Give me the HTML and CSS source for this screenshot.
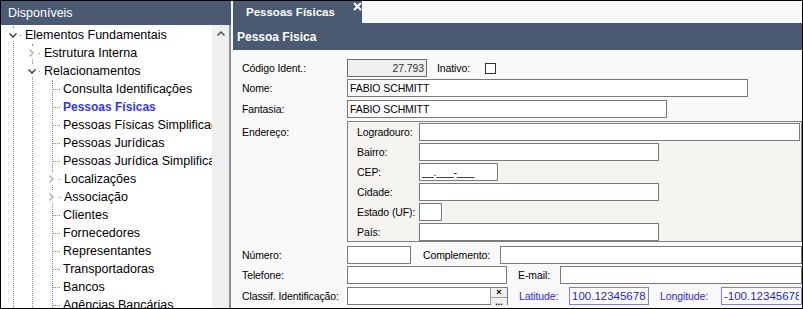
FILE: index.html
```html
<!DOCTYPE html>
<html lang="pt-BR">
<head>
    <meta charset="UTF-8">
    <meta name="viewport" content="width=device-width, initial-scale=1.0">
    <title>Pessoas Físicas</title>
    <link rel="stylesheet" href="styles.css">
</head>
<body>
    <div class="window">
        <div class="sidebar">
            <div class="sidebar-title">Disponíveis</div>
            <div class="tree-body">
                <div class="tree">
                    <ul class="tree-list root">
                        <li>
                            <div class="node node-branch">
                                <span class="toggle"><svg width="8" height="5" viewBox="0 0 8 5"><polyline points="0.5,0.5 4,4 7.5,0.5" fill="none" stroke="#404040" stroke-width="1.5"/></svg></span>
                                <span class="dot"></span>
                                <span class="text">Elementos Fundamentais</span>
                            </div>
                            <ul class="tree-list">
                                <li>
                                    <div class="node node-branch">
                                        <span class="toggle"><svg width="5" height="8" viewBox="0 0 5 8"><polyline points="0.5,0.5 4,4 0.5,7.5" fill="none" stroke="#b4b4b4" stroke-width="1.5"/></svg></span>
                                        <span class="dot"></span>
                                        <span class="text">Estrutura Interna</span>
                                    </div>
                                </li>
                                <li>
                                    <div class="node node-branch">
                                        <span class="toggle"><svg width="8" height="5" viewBox="0 0 8 5"><polyline points="0.5,0.5 4,4 7.5,0.5" fill="none" stroke="#404040" stroke-width="1.5"/></svg></span>
                                        <span class="dot"></span>
                                        <span class="text">Relacionamentos</span>
                                    </div>
                                    <ul class="tree-list">
                                        <li><div class="node"><span class="link"></span><span class="text">Consulta Identificações</span></div></li>
                                        <li><div class="node selected"><span class="link"></span><span class="text">Pessoas Físicas</span></div></li>
                                        <li><div class="node"><span class="link"></span><span class="text">Pessoas Físicas Simplificada</span></div></li>
                                        <li><div class="node"><span class="link"></span><span class="text">Pessoas Jurídicas</span></div></li>
                                        <li><div class="node"><span class="link"></span><span class="text">Pessoas Jurídica Simplificada</span></div></li>
                                        <li>
                                            <div class="node node-branch">
                                                <span class="toggle"><svg width="5" height="8" viewBox="0 0 5 8"><polyline points="0.5,0.5 4,4 0.5,7.5" fill="none" stroke="#b4b4b4" stroke-width="1.5"/></svg></span>
                                                <span class="dot"></span>
                                                <span class="text">Localizações</span>
                                            </div>
                                        </li>
                                        <li>
                                            <div class="node node-branch">
                                                <span class="toggle"><svg width="5" height="8" viewBox="0 0 5 8"><polyline points="0.5,0.5 4,4 0.5,7.5" fill="none" stroke="#b4b4b4" stroke-width="1.5"/></svg></span>
                                                <span class="dot"></span>
                                                <span class="text">Associação</span>
                                            </div>
                                        </li>
                                        <li><div class="node"><span class="link"></span><span class="text">Clientes</span></div></li>
                                        <li><div class="node"><span class="link"></span><span class="text">Fornecedores</span></div></li>
                                        <li><div class="node"><span class="link"></span><span class="text">Representantes</span></div></li>
                                        <li><div class="node"><span class="link"></span><span class="text">Transportadoras</span></div></li>
                                        <li><div class="node"><span class="link"></span><span class="text">Bancos</span></div></li>
                                        <li><div class="node"><span class="link"></span><span class="text">Agências Bancárias</span></div></li>
                                    </ul>
                                </li>
                            </ul>
                        </li>
                    </ul>
                </div>
                <div class="scrollbar">
                    <svg width="8" height="5" viewBox="0 0 8 5"><polyline points="0.5,4.5 4,1 7.5,4.5" fill="none" stroke="#505050" stroke-width="1.5"/></svg>
                </div>
            </div>
        </div>

        <div class="main">
            <div class="tabs">
                <div class="tab">
                    <span class="tab-text">Pessoas Físicas</span>
                    <svg class="tab-close" width="9" height="9" viewBox="0 0 9 9"><path d="M1 1 L8 8 M8 1 L1 8" stroke="#fff" stroke-width="2"/></svg>
                </div>
            </div>
            <div class="title-bar">Pessoa Fisica</div>

            <div class="form">
                <div class="row">
                    <label class="lbl">Código Ident.:</label>
                    <input class="field field-code" type="text" value="27.793" readonly>
                    <label class="lbl-inline inativo">Inativo:</label>
                    <span class="check"></span>
                </div>
                <div class="row gap-2">
                    <label class="lbl">Nome:</label>
                    <input class="field w-401" type="text" value="FABIO SCHMITT">
                </div>
                <div class="row gap-3">
                    <label class="lbl">Fantasia:</label>
                    <input class="field w-320" type="text" value="FABIO SCHMITT">
                </div>
                <div class="row row-top gap-3">
                    <label class="lbl lbl-top">Endereço:</label>
                    <div class="group">
                        <div class="row">
                            <label class="lbl-sub">Logradouro:</label>
                            <input class="field grow" type="text">
                        </div>
                        <div class="row">
                            <label class="lbl-sub">Bairro:</label>
                            <input class="field w-240" type="text">
                        </div>
                        <div class="row">
                            <label class="lbl-sub">CEP:</label>
                            <input class="field w-79" type="text" value="__.___-___">
                        </div>
                        <div class="row">
                            <label class="lbl-sub">Cidade:</label>
                            <input class="field w-240" type="text">
                        </div>
                        <div class="row">
                            <label class="lbl-sub">Estado (UF):</label>
                            <input class="field w-23" type="text">
                        </div>
                        <div class="row">
                            <label class="lbl-sub">País:</label>
                            <input class="field w-240" type="text">
                        </div>
                    </div>
                </div>
                <div class="row gap-4">
                    <label class="lbl">Número:</label>
                    <input class="field w-64" type="text">
                    <label class="lbl-inline complemento">Complemento:</label>
                    <input class="field grow" type="text">
                </div>
                <div class="row gap-2">
                    <label class="lbl">Telefone:</label>
                    <input class="field w-160" type="text">
                    <label class="lbl-inline email">E-mail:</label>
                    <input class="field grow" type="text">
                </div>
                <div class="row gap-3">
                    <label class="lbl">Classif. Identificação:</label>
                    <div class="lookup">
                        <div class="lookup-btns">
                            <span class="lookup-btn">×</span>
                            <span class="lookup-btn">...</span>
                        </div>
                    </div>
                    <label class="lbl-inline coord latitude">Latitude:</label>
                    <input class="field field-coord w-80" type="text" value="100.12345678">
                    <label class="lbl-inline coord longitude">Longitude:</label>
                    <input class="field field-coord grow" type="text" value="-100.12345678">
                </div>
            </div>
        </div>
    </div>
</body>
</html>
```

FILE: styles.css
```css
* {
    padding: 0;
    margin: 0;
    box-sizing: border-box;
}

body {
    font-family: "Liberation Sans", Arial, sans-serif;
    background-color: #ffffff;
}

.window {
    display: flex;
    width: 803px;
    height: 309px;
    border: 1px solid #000000;
    background-color: #f9f9f9;
    overflow: hidden;
}

/* left panel */

.sidebar {
    display: flex;
    flex-direction: column;
    width: 230px;
    flex-shrink: 0;
}

.sidebar-title {
    display: flex;
    align-items: center;
    flex-shrink: 0;
    height: 24px;
    padding-left: 7px;
    background-color: #4a5a73;
    color: #ffffff;
    font-size: 12.5px;
}

.tree-body {
    flex: 1;
    min-height: 0;
    display: flex;
    border-right: 2px solid #8c8c8c;
}

.tree {
    flex: 1;
    min-width: 0;
    padding-top: 1px;
    background-color: #ffffff;
    overflow: hidden;
    white-space: nowrap;
}

.scrollbar {
    width: 17px;
    flex-shrink: 0;
    background-color: #f0f0f0;
    display: flex;
    justify-content: center;
    padding-top: 6px;
}

.tree-list {
    list-style: none;
    border-left: 1px dotted #8a8a8a;
}

.tree-list.root {
    margin-left: 12px;
}

.tree-list .tree-list {
    margin-left: 18px;
}

.tree-list .tree-list .tree-list {
    margin-left: 19px;
}

.node {
    display: flex;
    align-items: center;
    height: 18px;
    font-size: 12.5px;
    color: #000000;
}

.node > span {
    flex-shrink: 0;
}

.node-branch {
    margin-left: -6px;
}

.toggle {
    display: flex;
    align-items: center;
    justify-content: center;
    width: 9px;
    height: 12px;
    background-color: #ffffff;
}

.dot {
    width: 1px;
    height: 1px;
    margin-left: 3px;
    background-color: #8a8a8a;
}

.node-branch .text {
    margin-left: 4px;
}

.link {
    width: 7px;
    border-top: 1px dotted #8a8a8a;
}

.node .link + .text {
    margin-left: 3px;
}

.node.selected {
    color: #3535f5;
    font-weight: bold;
    font-size: 12px;
}

/* right panel */

.main {
    flex: 1;
    min-width: 0;
    display: flex;
    flex-direction: column;
    padding-left: 2px;
}

.tabs {
    display: flex;
    flex-shrink: 0;
    height: 22px;
}

.tab {
    display: flex;
    width: 129px;
    padding-left: 13px;
    background-color: #4a5a73;
    color: #ffffff;
}

.tab-text {
    align-self: center;
    font-size: 11.5px;
    font-weight: bold;
}

.tab-close {
    margin-left: 18px;
    margin-top: 1px;
}

.title-bar {
    display: flex;
    align-items: center;
    flex-shrink: 0;
    height: 27px;
    padding-left: 4px;
    background-color: #4a5a73;
    color: #ffffff;
    font-size: 12px;
    font-weight: bold;
}

.form {
    padding: 9px 0 0 9px;
    font-size: 10.5px;
    letter-spacing: -0.1px;
    color: #000000;
}

.row {
    display: flex;
    align-items: center;
    flex-shrink: 0;
    height: 18px;
}

.row-top {
    align-items: flex-start;
    height: auto;
}

.gap-2 { margin-top: 2px; }
.gap-3 { margin-top: 3px; }
.gap-4 { margin-top: 4px; }

.lbl {
    width: 105px;
    flex-shrink: 0;
}

.lbl-top {
    padding-top: 5px;
}

.lbl-sub {
    width: 62px;
    flex-shrink: 0;
}

.lbl-inline {
    flex-shrink: 0;
}

.field {
    height: 18px;
    padding: 0 2px;
    border: 1px solid #7a7a7a;
    background-color: #ffffff;
    font-family: inherit;
    font-size: 10.5px;
    letter-spacing: -0.1px;
    color: #000000;
    outline: none;
}

.field-code {
    width: 80px;
    background-color: #f0f0f0;
    border-color: #6a6a6a;
    text-align: right;
    color: #333333;
}

.inativo { margin-left: 10px; }

.check {
    width: 11px;
    height: 11px;
    margin-left: 15px;
    border: 1px solid #333333;
    background-color: #ffffff;
}

.w-401 { width: 401px; }
.w-320 { width: 320px; }
.w-240 { width: 240px; }
.w-160 { width: 160px; }
.w-80 { width: 80px; }
.w-79 { width: 79px; }
.w-64 { width: 64px; }
.w-23 { width: 23px; }

.grow {
    flex: 1;
    min-width: 0;
}

.group {
    flex: 1;
    display: flex;
    flex-direction: column;
    gap: 2px;
    padding: 1px 1px 0 9px;
    border: 1px solid #808080;
    background-color: #f5f4f0;
}

.complemento {
    width: 77px;
    margin-left: 12px;
}

.email {
    width: 42px;
    margin-left: 11px;
}

.lookup {
    display: flex;
    justify-content: flex-end;
    width: 161px;
    height: 18px;
    border: 1px solid #7a7a7a;
    background-color: #ffffff;
}

.lookup-btns {
    display: flex;
    flex-direction: column;
    width: 17px;
    border-left: 1px solid #a0a0a0;
}

.lookup-btn {
    flex: 1;
    display: flex;
    align-items: center;
    justify-content: center;
    background-color: #f0f0f0;
    font-size: 9px;
    font-weight: bold;
    line-height: 1;
    letter-spacing: 0;
}

.lookup-btn + .lookup-btn {
    border-top: 1px solid #a0a0a0;
    align-items: flex-start;
}

.coord {
    color: #2a2ae0;
}

.latitude {
    width: 50px;
    margin-left: 11px;
}

.longitude {
    width: 61px;
    margin-left: 11px;
}

.field-coord {
    border-color: #7b7bff;
    color: #1c1cd8;
    font-size: 11.5px;
    letter-spacing: 0;
}
```
